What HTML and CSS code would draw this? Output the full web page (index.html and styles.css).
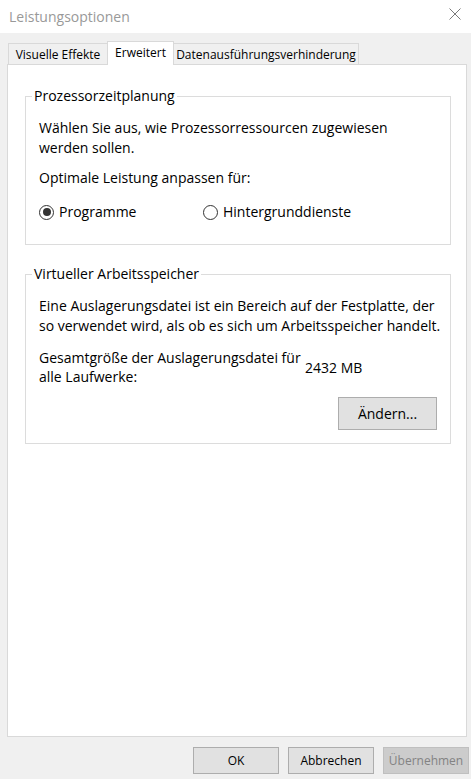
FILE: index.html
```html
<!DOCTYPE html>
<html lang="de">
<head>
  <meta charset="UTF-8" />
  <title>Leistungsoptionen</title>
  <link rel="stylesheet" href="styles.css">
</head>
<body>

  <!-- Title bar -->
  <div class="titlebar">
    <span class="title">Leistungsoptionen</span>
    <svg class="close" width="12" height="12" viewBox="0 0 12 12">
      <path d="M0.5 0.5 L11.5 11.5 M11.5 0.5 L0.5 11.5" stroke="#7a7a7a" stroke-width="1" fill="none" />
    </svg>
  </div>

  <!-- Tabs -->
  <div class="tabs">
    <div class="tab tab-effects">Visuelle Effekte</div>
    <div class="tab tab-advanced tab-active">Erweitert</div>
    <div class="tab tab-dep">Datenausführungsverhinderung</div>
  </div>

  <div class="panel">
    <fieldset class="group">
      <legend>Prozessorzeitplanung</legend>
      <p>Wählen Sie aus, wie Prozessorressourcen zugewiesen<br>werden sollen.</p>
      <p class="spaced">Optimale Leistung anpassen für:</p>
      <div class="radios">
        <label class="radio"><span class="radio-dot checked"></span>Programme</label>
        <label class="radio"><span class="radio-dot"></span>Hintergrunddienste</label>
      </div>
    </fieldset>

    <fieldset class="group group-memory">
      <legend>Virtueller Arbeitsspeicher</legend>
      <p>Eine Auslagerungsdatei ist ein Bereich auf der Festplatte, der<br>so verwendet wird, als ob es sich um Arbeitsspeicher handelt.</p>
      <div class="total">
        <div class="total-label">Gesamtgröße der Auslagerungsdatei für<br>alle Laufwerke:</div>
        <div class="total-value">2432 MB</div>
      </div>
      <div class="change-row">
        <button class="button button-change">Ändern...</button>
      </div>
    </fieldset>
  </div>

  <!-- Dialog buttons -->
  <div class="actions">
    <button class="button">OK</button>
    <button class="button">Abbrechen</button>
    <button class="button" disabled>Übernehmen</button>
  </div>

</body>
</html>
```

FILE: styles.css
```css
* {
  box-sizing: border-box;
}

body {
  margin: 0;
  width: 471px;
  height: 779px;
  overflow: hidden;
  background: #f0f0f0;
  font-family: "Open Sans", "Noto Sans", sans-serif;
  font-size: 14px;
  line-height: 20px;
  color: #000;
}

p {
  margin: 0;
  white-space: nowrap;
}

/* Title bar */
.titlebar {
  height: 33px;
  background: #fff;
  display: flex;
  align-items: center;
  justify-content: space-between;
  padding: 0 10px 0 9px;
}

.title {
  color: #999;
  font-size: 14px;
}

.close {
  align-self: flex-start;
  margin-top: 8px;
}

/* Tabs */
.tabs {
  display: flex;
  align-items: flex-end;
  height: 23px;
  margin-top: 8px;
  padding-left: 8px;
}

.tab {
  height: 21px;
  padding-top: 1px;
  border: 1px solid #d9d9d9;
  border-bottom: none;
  background: #f0f0f0;
  font-size: 12px;
  line-height: 19px;
  text-align: center;
  white-space: nowrap;
}

.tab + .tab {
  margin-left: -1px;
}

.tab-effects { width: 100px; }
.tab-advanced { width: 67px; }
.tab-dep { width: 186px; }

.tab-active {
  height: 24px;
  margin-bottom: -1px;
  background: #fff;
  position: relative;
  z-index: 1;
}

/* Tab page */
.panel {
  height: 673px;
  margin: 0 4px 0 7px;
  padding: 21px 15px 0 17px;
  border: 1px solid #d9d9d9;
  background: #fff;
}

.group {
  margin: 0;
  min-width: 0;
  padding: 12px 13px 22px 13px;
  border: 1px solid #dcdcdc;
}

.group legend {
  padding: 0 2px;
  margin-left: -7px;
}

.group-memory {
  margin-top: 19px;
  padding-bottom: 13px;
}

.spaced {
  margin-top: 10px;
}

/* Radio buttons */
.radios {
  display: grid;
  grid-template-columns: 164px auto;
  margin-top: 14px;
}

.radio {
  display: flex;
  align-items: center;
}

.radio-dot {
  width: 15px;
  height: 15px;
  margin-right: 5px;
  border: 1px solid #333;
  border-radius: 50%;
  display: flex;
  align-items: center;
  justify-content: center;
}

.radio-dot.checked::after {
  content: "";
  width: 8px;
  height: 8px;
  border-radius: 50%;
  background: #333;
}

/* Page file size */
.total {
  display: grid;
  grid-template-columns: 266px auto;
  align-items: center;
  margin-top: 12px;
  line-height: 19px;
  white-space: nowrap;
}

.change-row {
  display: flex;
  justify-content: flex-end;
  margin-top: 11px;
}

/* Buttons */
.button {
  width: 86px;
  height: 27px;
  padding: 0;
  border: 1px solid #adadad;
  background: #e1e1e1;
  font-family: "Open Sans", "Noto Sans", sans-serif;
  font-size: 12px;
  color: #000;
}

.button:disabled {
  border-color: #bfbfbf;
  background: #cccccc;
  color: #838383;
}

.button-change {
  width: 99px;
  height: 33px;
  font-size: 14px;
}

.actions {
  display: flex;
  justify-content: flex-end;
  gap: 9px;
  margin-top: 10px;
  padding-right: 2px;
}
```
